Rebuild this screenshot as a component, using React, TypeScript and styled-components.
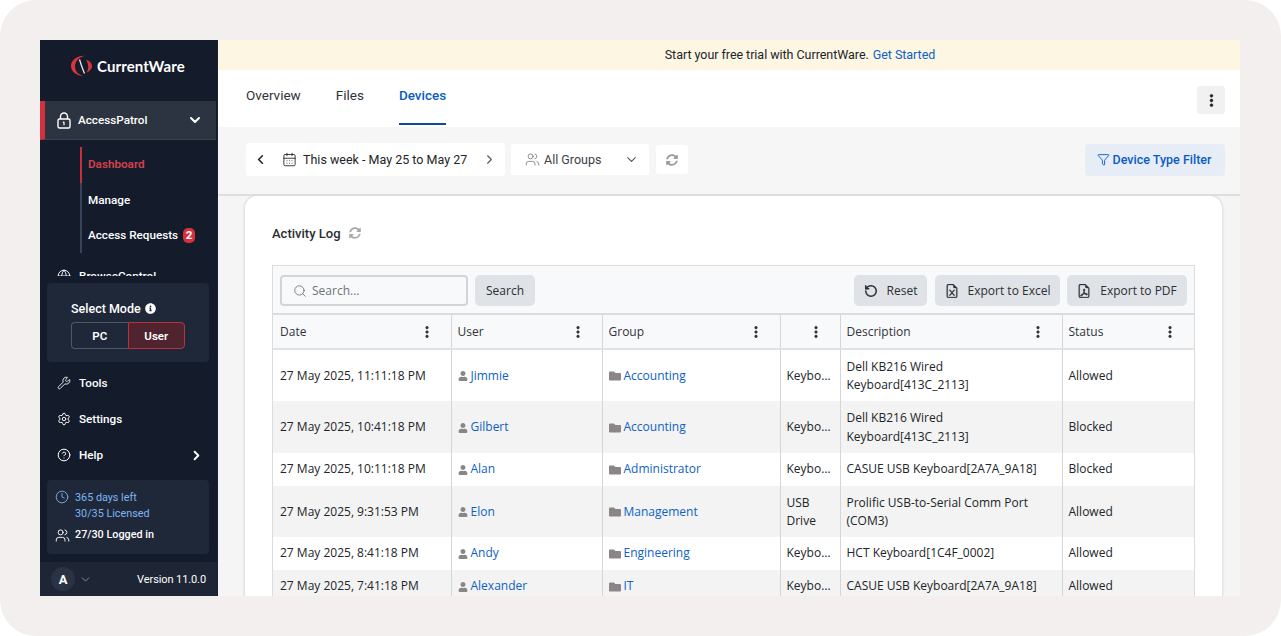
import React from "react";
import styled, { createGlobalStyle } from "styled-components";
import {
  CalendarDays, ChevronDown, ChevronLeft, ChevronRight, CircleHelp, Clock, Filter, Globe,
  RotateCw, Search as SearchIcon, Settings, Users, Wrench,
} from "lucide-react";
import { FaFolder, FaUser, FaInfoCircle, FaSyncAlt } from "react-icons/fa";
import { BsFileEarmarkExcel, BsFileEarmarkPdf, BsThreeDotsVertical } from "react-icons/bs";

const Global = createGlobalStyle`
  html, body { margin: 0; padding: 0; background: #fff; }
  * { box-sizing: border-box; }
  body { font-family: Roboto, "Liberation Sans", sans-serif; }
`;

const Frame = styled.div`
  width: 1281px; height: 636px; background: #f2efee; border-radius: 36px;
  padding: 40px 41px 40px 40px; overflow: hidden;
`;
const Win = styled.div`display: flex; height: 556px; overflow: hidden; background: #f5f5f5;`;

/* sidebar */
const Side = styled.aside`
  width: 178px; flex: none; background: #141c2c; color: #fff; display: flex; flex-direction: column;
  border-right: 1px solid #1a2233; font-size: 11.7px; font-weight: 500;
`;
const Logo = styled.div`
  height: 61px; flex: none; display: flex; align-items: center; gap: 3px;
  padding: 0 0 10px 30px; font-family: Lato, sans-serif; font-weight: 700; font-size: 15px; letter-spacing: .1px;
`;
const ScrollNav = styled.div`height: 175px; overflow: hidden; flex: none;`;
const ActiveItem = styled.div`
  height: 39px; width: 176px; background: #2d3441; border-left: 5px solid #d5303d; border-bottom: 1px solid #3b4250;
  display: flex; align-items: center; padding: 0 13px 0 12px; gap: 7px;
`;
const Grow = styled.span`flex: 1;`;
const SubList = styled.div`
  margin: 7px 0 0 40px; border-left: 2px solid #36435a; height: 106px; position: relative;
  padding-left: 6px; display: flex; flex-direction: column;
  &::before { content: ""; position: absolute; left: -2px; top: 0; width: 2px; height: 36px; background: #c6303c; }
`;
const SubItem = styled.div<{ $active?: boolean }>`
  height: 35.5px; display: flex; align-items: center; gap: 5px; color: ${p => (p.$active ? "#d5404c" : "#fff")};
  font-weight: ${p => (p.$active ? 600 : 500)}; padding-bottom: ${p => (p.$active ? "2px" : "0")};
`;
const Badge = styled.span`
  background: #d8303d; border-radius: 5px; min-width: 12px; height: 15px; padding: 0 2px; display: inline-flex;
  align-items: center; justify-content: center; font-size: 11.5px; font-weight: 700;
`;
const NavRow = styled.div`
  height: 36px; display: flex; align-items: center; gap: 8px; padding: 0 13px 0 17px; flex: none;
  color: #fff;
`;
const ClippedRow = styled(NavRow)`margin-top: 5px;`;
const ModePanel = styled.div`
  flex: none; margin: 7px 8px 0 7px; height: 79px; background: #1f2838; border-radius: 4px; padding: 17px 24px;
`;
const ModeTitle = styled.div`display: flex; align-items: center; gap: 4px; font-size: 12.5px; height: 16px;`;
const ModeToggle = styled.div`display: flex; margin-top: 6px; width: 114px; height: 27px;`;
const ModeBtn = styled.div<{ $on?: boolean }>`
  flex: 1; display: flex; align-items: center; justify-content: center; font-size: 11.5px; font-weight: 600;
  border: 1px solid ${p => (p.$on ? "#b8313f" : "#4f5968")};
  background: ${p => (p.$on ? "#50242f" : "transparent")};
  border-radius: ${p => (p.$on ? "0 4px 4px 0" : "4px 0 0 4px")};
  border-right-width: ${p => (p.$on ? "1px" : "0")};
`;
const BottomNav = styled.div`padding-top: 3px; flex: none;`;
const LicensePanel = styled.div`
  flex: none; margin: 7px 8px 0 7px; height: 74px; background: #1f2838; border-radius: 4px;
  padding: 10px 8px 0 8px; font-size: 10.8px;
`;
const LicRow = styled.div`display: flex; gap: 6px; align-items: flex-start;`;
const LicBlue = styled.div`color: #7db6f5; line-height: 16px; font-weight: 400;`;
const LicWhite = styled.div`line-height: 16px; margin-top: 5px; display: flex; gap: 5px; align-items: center; font-weight: 500;`;
const Foot = styled.div`
  margin-top: 8px; flex: 1; background: #1e2636; display: flex; align-items: center; padding: 0 11px; gap: 4px;
  width: 177px;
`;
const Avatar = styled.div`
  width: 24px; height: 24px; border-radius: 50%; background: #2a3344; display: flex; align-items: center;
  justify-content: center; font-size: 13px; font-weight: 700;
`;
const Version = styled.span`font-size: 11px; font-weight: 400; letter-spacing: -.1px;`;

/* main */
const Main = styled.main`flex: 1; min-width: 0; display: flex; flex-direction: column;`;
const Banner = styled.div`
  height: 30px; flex: none; background: #fdf6e3; display: flex; align-items: center; justify-content: center;
  font-size: 12.5px; letter-spacing: -.04px; color: #212529; gap: 4px; padding-bottom: 1px; padding-left: 142px;
  a { color: #0b62c9; text-decoration: none; }
`;
const Tabs = styled.div`
  height: 57px; flex: none; background: #fff; display: flex; align-items: stretch; padding: 0 15px 0 28px; gap: 35px;
  font-size: 13.5px;
`;
const Tab = styled.div<{ $on?: boolean }>`
  height: 55px; padding-top: 17px; color: ${p => (p.$on ? "#0b5cc0" : "#2f3338")}; font-weight: ${p => (p.$on ? 500 : 400)};
  border-bottom: 2px solid ${p => (p.$on ? "#0d47a8" : "transparent")};
`;
const KebabBtn = styled.div`
  margin-left: auto; align-self: flex-start; margin-top: 16px; width: 28px; height: 28px; border-radius: 3px;
  background: #f1f1f1; display: flex; align-items: center; justify-content: center; color: #222;
`;
const Toolbar = styled.div`
  height: 69px; flex: none; background: #f6f6f6; border-bottom: 2px solid #dedede; display: flex; align-items: center;
  padding: 0 15px 2px 28px; font-size: 12.5px; color: #212529;
`;
const ToolBox = styled.div<{ $w: number; $h: number; $ml?: number }>`
  width: ${p => p.$w}px; height: ${p => p.$h}px; margin-left: ${p => p.$ml ?? 0}px; background: #fff; border-radius: 3px;
  display: flex; align-items: center;
`;
const DateBox = styled(ToolBox)`padding: 0 8px 0 7px; gap: 6px;`;
const CalendarMark = styled(CalendarDays)`margin-left: 8px;`;
const GroupBox = styled(ToolBox)`padding: 0 10px 0 14px; gap: 4px; color: #3c4146;`;
const RefreshBox = styled(ToolBox)`justify-content: center;`;
const FilterBtn = styled.div`
  margin-left: auto; width: 140px; height: 32px; background: #e7edf7; border-radius: 3px; color: #0b5cc4; font-weight: 500;
  font-size: 12.5px; display: flex; align-items: center; justify-content: center; gap: 3px; padding-right: 2px;
`;
const Body = styled.div`flex: 1; min-height: 0; padding-left: 27px; padding-right: 18px; overflow: hidden;`;
const Card = styled.section`
  background: #fff; border-radius: 12px 12px 0 0; box-shadow: 0 0 3px rgba(0,0,0,.22); height: 420px; padding: 0 27px;
`;
const CardHead = styled.div`
  height: 69px; display: flex; align-items: center; gap: 8px; font-size: 13px; font-weight: 500; color: #2a2e33; padding-top: 5px;
`;
const TableWrap = styled.div`border: 1px solid #dcdcdc; border-bottom: 0; font-family: "Open Sans", sans-serif; font-size: 12px; color: #212529;`;
const TableBar = styled.div`
  height: 49px; background: #f8f9fb; border-bottom: 2px solid #dcdcdc; display: flex; align-items: center;
  padding: 2px 7px 0 7px; gap: 7px;
`;
const SearchBox = styled.div`
  width: 188px; height: 31px; border: 2px solid #d2d4d7; border-radius: 4px; background: #f8f9fb; display: flex;
  align-items: center; gap: 5px; padding-left: 11px; color: #6f7479;
`;
const GrayBtn = styled.div<{ $w: number; $mr?: number }>`
  width: ${p => p.$w}px; height: 31px; background: #dfe2e6; border-radius: 5px; display: flex; align-items: center;
  justify-content: center; gap: 9px; color: #2b2f33; flex: none; margin-right: ${p => p.$mr ?? 0}px;
`;
const Spacer = styled.div`flex: 1;`;
const Tbl = styled.table`width: 100%; table-layout: fixed; border-collapse: collapse;`;
const Th = styled.th`
  height: 34px; background: #f8f9fb; border-right: 1px solid #d6d6d6; border-bottom: 2px solid #e2e2e2; text-align: left;
  padding: 0 7px 0 6px; font-weight: 400;
  &:first-child { padding-left: 7px; }
  &:last-child { border-right: 0; }
`;
const ThInner = styled.div`display: flex; align-items: center; justify-content: space-between; padding-right: 10px; color: #30343a;`;
const Tr = styled.tr<{ $h: number; $alt?: boolean }>`
  height: ${p => p.$h}px; background: ${p => (p.$alt ? "#f3f3f3" : "#fff")};
  ${p => (p.$h >= 50 ? "td { padding-top: 1px; }" : "")}
`;
const Td = styled.td`
  border-right: 1px solid #d6d6d6; padding: 0 7px 0 6px; line-height: 18.5px; vertical-align: middle;
  &:first-child { padding-left: 7px; }
  &:last-child { border-right: 0; }
`;
const Ellip = styled.div`white-space: nowrap; overflow: hidden; text-overflow: ellipsis;`;
const LinkCell = styled.div`display: flex; align-items: center; gap: 3px; color: #0d62c4; svg { color: #8b8685; flex: none; }`;

const LogoMark = () => (
  <svg width="24" height="22" viewBox="0 0 24 22" aria-hidden>
    <path d="M15 .8C7 .6 1 5 1 11c0 5.600 5.500 10 13 10.200-5.500-1.200-9-5-9-9.700C5 6.500 9 2.300 15 .8z" fill="#d9343d" />
    <path d="M9.500 4.500c1.200 4 2.600 8.500 5 14" fill="none" stroke="#e8e8e8" strokeWidth="1.300" />
    <path d="M16 4.500c3.800 1.500 6 3.700 6 6.700 0 2.600-2.200 4.900-5.600 6.500 1.300-2 1.900-4 1.800-6-.1-2.600-.8-5-2.200-7.200z" fill="#d9343d" />
  </svg>
);

const LockMark = () => (
  <svg width="14" height="17" viewBox="0 0 14 17" fill="none" stroke="#fff" aria-hidden>
    <path d="M3.500 7V4.500a3.500 3.500 0 0 1 7 0V7" strokeWidth="1.400" />
    <rect x="1" y="7" width="12" height="9" rx="1.500" strokeWidth="1.400" />
    <path d="M7 9.800v3.400M6 10.600l1-.8" strokeWidth="1.200" />
  </svg>
);

const Kebab = () => <BsThreeDotsVertical size={14} strokeWidth={0.6} />;
const columns = ["Date", "User", "Group", "", "Description", "Status"];
const widths = [178, 151, 178, 60, 222, 132];
const rows = [
  { h: 52, date: "27 May 2025, 11:11:18 PM", user: "Jimmie", group: "Accounting", type: "Keyboard", desc: "Dell KB216 Wired Keyboard[413C_2113]", status: "Allowed" },
  { h: 52, date: "27 May 2025, 10:41:18 PM", user: "Gilbert", group: "Accounting", type: "Keyboard", desc: "Dell KB216 Wired Keyboard[413C_2113]", status: "Blocked" },
  { h: 33, date: "27 May 2025, 10:11:18 PM", user: "Alan", group: "Administrator", type: "Keyboard", desc: "CASUE USB Keyboard[2A7A_9A18]", status: "Blocked" },
  { h: 51, date: "27 May 2025, 9:31:53 PM", user: "Elon", group: "Management", type: "USB Drive", desc: "Prolific USB-to-Serial Comm Port (COM3)", status: "Allowed" },
  { h: 33, date: "27 May 2025, 8:41:18 PM", user: "Andy", group: "Engineering", type: "Keyboard", desc: "HCT Keyboard[1C4F_0002]", status: "Allowed" },
  { h: 33, date: "27 May 2025, 7:41:18 PM", user: "Alexander", group: "IT", type: "Keyboard", desc: "CASUE USB Keyboard[2A7A_9A18]", status: "Allowed" },
];

export default function App() {
  return (
    <Frame>
      <Global />
      <Win>
        <Side>
          <Logo><LogoMark /><span>CurrentWare</span></Logo>
          <ScrollNav>
            <ActiveItem>
              <LockMark />
              <span>AccessPatrol</span><Grow />
              <ChevronDown size={16} strokeWidth={3} />
            </ActiveItem>
            <SubList>
              <SubItem $active>Dashboard</SubItem>
              <SubItem>Manage</SubItem>
              <SubItem>Access Requests <Badge>2</Badge></SubItem>
            </SubList>
            <ClippedRow><Globe size={14} strokeWidth={1.6} /><span>BrowseControl</span></ClippedRow>
          </ScrollNav>
          <ModePanel>
            <ModeTitle>Select Mode <FaInfoCircle size={11} /></ModeTitle>
            <ModeToggle><ModeBtn>PC</ModeBtn><ModeBtn $on>User</ModeBtn></ModeToggle>
          </ModePanel>
          <BottomNav>
            <NavRow><Wrench size={14} strokeWidth={1.5} /><span>Tools</span></NavRow>
            <NavRow><Settings size={14} strokeWidth={1.7} /><span>Settings</span></NavRow>
            <NavRow><CircleHelp size={14} strokeWidth={1.7} /><span>Help</span><Grow /><ChevronRight size={15} strokeWidth={3} /></NavRow>
          </BottomNav>
          <LicensePanel>
            <LicRow>
              <Clock size={14} strokeWidth={1.5} color="#7db6f5" />
              <LicBlue>365 days left<br />30/35 Licensed</LicBlue>
            </LicRow>
            <LicWhite><Users size={15} strokeWidth={1.5} /><span>27/30 Logged in</span></LicWhite>
          </LicensePanel>
          <Foot>
            <Avatar>A</Avatar>
            <ChevronDown size={13} strokeWidth={1.5} color="#9aa3b0" />
            <Grow />
            <Version>Version 11.0.0</Version>
          </Foot>
        </Side>
        <Main>
          <Banner><span>Start your free trial with CurrentWare.</span><a href="#s">Get Started</a></Banner>
          <Tabs>
            <Tab>Overview</Tab><Tab>Files</Tab><Tab $on>Devices</Tab>
            <KebabBtn><BsThreeDotsVertical size={15} strokeWidth={0.6} /></KebabBtn>
          </Tabs>
          <Toolbar>
            <DateBox $w={259} $h={33}>
              <ChevronLeft size={15} strokeWidth={2.6} />
              <CalendarMark size={15} strokeWidth={1.4} />
              <span>This week - May 25 to May 27</span><Grow />
              <ChevronRight size={15} strokeWidth={1.8} color="#555" />
            </DateBox>
            <GroupBox $w={138} $h={31} $ml={6}>
              <Users size={15} strokeWidth={1.3} color="#777" /><span>All Groups</span><Grow />
              <ChevronDown size={15} strokeWidth={1.8} color="#555" />
            </GroupBox>
            <RefreshBox $w={32} $h={29} $ml={7}><FaSyncAlt size={12} color="#9a9a9a" /></RefreshBox>
            <FilterBtn><Filter size={13} strokeWidth={1.7} /><span>Device Type Filter</span></FilterBtn>
          </Toolbar>
          <Body>
            <Card>
              <CardHead><span>Activity Log</span><FaSyncAlt size={12} color="#aaa" /></CardHead>
              <TableWrap>
                <TableBar>
                  <SearchBox><SearchIcon size={14} strokeWidth={1.5} /><span>Search...</span></SearchBox>
                  <GrayBtn $w={60}>Search</GrayBtn>
                  <Spacer />
                  <GrayBtn $w={73} $mr={1}><RotateCw size={14} strokeWidth={2.6} style={{ transform: "scaleX(-1)" }} /><span>Reset</span></GrayBtn>
                  <GrayBtn $w={125}><BsFileEarmarkExcel size={14} strokeWidth={0.4} /><span>Export to Excel</span></GrayBtn>
                  <GrayBtn $w={120}><BsFileEarmarkPdf size={14} strokeWidth={0.4} /><span>Export to PDF</span></GrayBtn>
                </TableBar>
                <Tbl>
                  <colgroup>{widths.map((w, i) => <col key={i} style={{ width: w }} />)}</colgroup>
                  <thead>
                    <tr>{columns.map((c, i) => <Th key={i}><ThInner><span>{c}</span><Kebab /></ThInner></Th>)}</tr>
                  </thead>
                  <tbody>
                    {rows.map((r, i) => (
                      <Tr key={i} $h={r.h} $alt={i % 2 === 1}>
                        <Td>{r.date}</Td>
                        <Td><LinkCell><FaUser size={10} /><span>{r.user}</span></LinkCell></Td>
                        <Td><LinkCell><FaFolder size={12} /><span>{r.group}</span></LinkCell></Td>
                        <Td>{r.type === "USB Drive" ? r.type : <Ellip>{r.type}</Ellip>}</Td>
                        <Td>{r.desc}</Td>
                        <Td>{r.status}</Td>
                      </Tr>
                    ))}
                  </tbody>
                </Tbl>
              </TableWrap>
            </Card>
          </Body>
        </Main>
      </Win>
    </Frame>
  );
}
